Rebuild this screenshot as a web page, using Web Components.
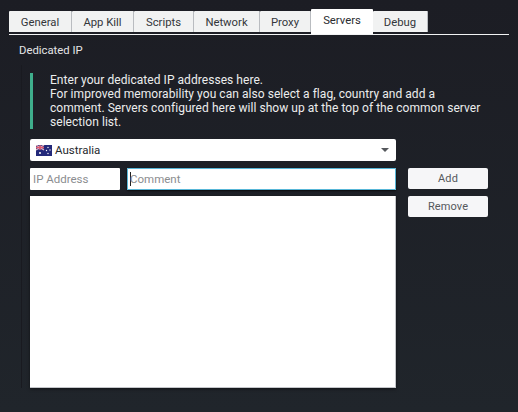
<!DOCTYPE html>
<html>
<head>
<meta charset="utf-8">
<title>Servers</title>
<style>
  html, body { margin: 0; height: 100%; }
  body { background: linear-gradient(#1c1d24, #20252b); font-family: Roboto, "Liberation Sans", sans-serif; overflow: hidden; }
</style>
</head>
<body>
<settings-page>
  <tab-bar active="Servers" tabs="General:63,App Kill:62,Scripts:60,Network:66,Proxy:51,Servers:62,Debug:55"></tab-bar>
  <server-panel title-text="Dedicated IP">
    <note-box>
      Enter your dedicated IP addresses here.<br>
      For improved memorability you can also select a flag, country and add a<br>
      comment. Servers configured here will show up at the top of the common server<br>
      selection list.
    </note-box>
    <country-select>Australia</country-select>
    <text-field slot="ip" hint="IP Address"></text-field>
    <text-field slot="comment" hint="Comment" focused></text-field>
    <list-box slot="list"></list-box>
    <flat-button slot="buttons">Add</flat-button>
    <flat-button slot="buttons" style="margin-top:7px">Remove</flat-button>
  </server-panel>
</settings-page>
<script>
  function simple(name, html) {
    customElements.define(name, class extends HTMLElement {
      constructor() {
        super();
        this.attachShadow({ mode: "open" });
        this.shadowRoot.innerHTML = html;
      }
    });
  }

  simple("settings-page", `
    <style>
      :host { display: block; padding: 9px 9px 0; color: #e8e9ea; }
    </style>
    <slot></slot>`);

  // tabs come in as name:width pairs
  class TabBar extends HTMLElement {
    connectedCallback() {
      const active = this.getAttribute("active");
      const tabs = this.getAttribute("tabs").split(",").map((t) => t.split(":"));
      this.attachShadow({ mode: "open" });
      this.shadowRoot.innerHTML = `
        <style>
          :host { display: flex; align-items: flex-end; height: 25px; width: 500px; border-bottom: 1px solid #f2f3f4; }
          .tab {
            box-sizing: border-box; height: 21px; margin: 0 0 2px 0; border-right: 1px solid #b9bcc0;
            background: #f1f2f2; color: #33363a; font-size: 11.3px; line-height: 23px; text-align: center;
            border-radius: 1px 1px 0 0;
          }
          .tab.on { height: 25px; margin-bottom: 0; background: #fff; color: #2a2c30; line-height: 24px; border-right: 0; }
        </style>
        ${tabs.map(([n, w]) => `<div class="tab ${n === active ? "on" : ""}" style="width:${w}px">${n}</div>`).join("")}`;
    }
  }
  customElements.define("tab-bar", TabBar);

  class ServerPanel extends HTMLElement {
    connectedCallback() {
      this.attachShadow({ mode: "open" });
      this.shadowRoot.innerHTML = `
        <style>
          :host { display: block; }
          h2 { margin: 0; padding: 9px 0 0 10px; font: 400 11.3px/14px Roboto, "Liberation Sans", sans-serif; color: #e4e5e7; }
          .body {
            margin: 7px 0 0 12px; padding: 8px 0 0 8px; width: 458px;
            border-left: 1px solid #191a20;
            display: grid; grid-template-columns: 366px 80px; column-gap: 12px;
          }
          .main { display: flex; flex-direction: column; }
          .row { display: flex; gap: 7px; margin-top: 7px; }
          .side { padding-top: 95px; }
        </style>
        <h2>${this.getAttribute("title-text")}</h2>
        <div class="body">
          <div class="main">
            <slot></slot>
            <div class="row"><slot name="ip"></slot><slot name="comment"></slot></div>
            <slot name="list"></slot>
          </div>
          <div class="side"><slot name="buttons"></slot></div>
        </div>`;
    }
  }
  customElements.define("server-panel", ServerPanel);

  simple("note-box", `
    <style>
      :host {
        display: block; box-sizing: border-box; height: 56px; margin-bottom: 10px; padding-left: 17px;
        border-left: 3px solid #3fae8c; font-size: 12px; line-height: 14px; color: #eceded;
        letter-spacing: .05px; white-space: nowrap;
      }
    </style>
    <slot></slot>`);

  simple("country-select", `
    <style>
      :host {
        display: flex; align-items: center; box-sizing: border-box; height: 22px; padding: 0 7px 0 6px;
        background: #fff; border-radius: 2px; color: #26282c; font-size: 11.5px;
      }
      svg { display: block; margin-right: 3px; }
      .label { flex: 1; }
      .arrow { width: 0; height: 0; border: 4px solid transparent; border-top: 4px solid #55585c; border-bottom: 0; }
    </style>
    <svg width="16" height="11" viewBox="0 0 16 11">
      <rect width="16" height="11" fill="#23297a"/>
      <rect width="8" height="5" fill="#3a3f8c"/>
      <path d="M0 0L8 5M8 0L0 5" stroke="#e6b8c4" stroke-width="1.2"/>
      <path d="M4 0V5M0 2.500H8" stroke="#e05a70" stroke-width="1.300"/>
      <circle cx="4" cy="8" r="1" fill="#fff"/>
      <circle cx="12" cy="2.500" r=".7" fill="#fff"/>
      <circle cx="14" cy="5" r=".7" fill="#fff"/>
      <circle cx="10.500" cy="5.500" r=".7" fill="#fff"/>
      <circle cx="12" cy="8.500" r=".7" fill="#fff"/>
    </svg>
    <span class="label"><slot></slot></span>
    <span class="arrow"></span>`);

  class TextField extends HTMLElement {
    connectedCallback() {
      const focused = this.hasAttribute("focused");
      this.attachShadow({ mode: "open" });
      this.shadowRoot.innerHTML = `
        <style>
          :host { display: block; }
          .box {
            box-sizing: border-box; height: 22px; padding-left: 3px; background: #fff; border-radius: 1px;
            color: #8b8d90; font-size: 11.5px; line-height: 22px; display: flex; align-items: center;
          }
          .box.on { box-shadow: inset 0 0 0 1px #58b7d8, 0 1px 2px rgba(0, 0, 0, .7); }
          .caret { width: 1px; height: 14px; background: #222; margin-right: -1px; }
        </style>
        <div class="box ${focused ? "on" : ""}" style="width:${focused ? 269 : 90}px">${focused ? '<span class="caret"></span>' : ""}${this.getAttribute("hint")}</div>`;
    }
  }
  customElements.define("text-field", TextField);

  simple("list-box", `
    <style>
      :host {
        display: block; height: 192px; margin-top: 6px; background: #fff; box-sizing: border-box;
        border-bottom: 1px solid #c4c6ca; border-right: 1px solid #c4c6ca; box-shadow: 0 1px 3px rgba(0, 0, 0, .5);
      }
    </style>`);

  simple("flat-button", `
    <style>
      :host {
        display: block; height: 21px; background: #f6f6f8; border-radius: 2px; color: #55585c;
        font-size: 11px; line-height: 21px; text-align: center; letter-spacing: .1px;
      }
    </style>
    <slot></slot>`);
</script>
</body>
</html>
